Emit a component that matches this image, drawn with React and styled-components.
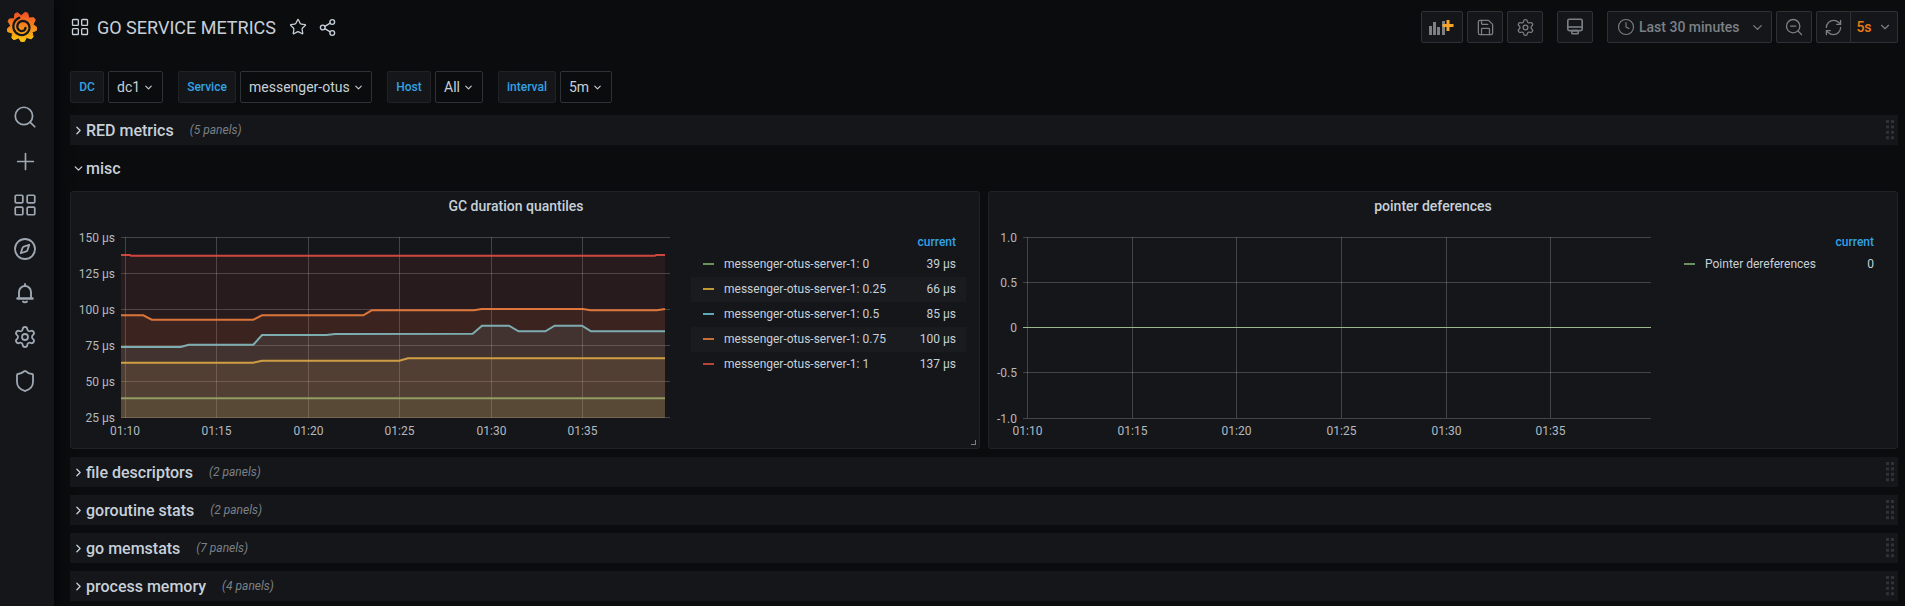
import React from 'react'
import styled, { createGlobalStyle } from 'styled-components'
import {
  ChevronDown, ChevronRight, Clock, Compass, LayoutGrid, Plus, RefreshCw,
  Save, Search, Settings, Share2, Shield, Star, ZoomOut,
} from 'lucide-react'

const GlobalStyle = createGlobalStyle`
  html, body {
    margin: 0;
    height: 100%;
    background: #0b0c0e;
    overflow: hidden;
  }
  body {
    font-family: Roboto, "Liberation Sans", sans-serif;
    color: #c7d0d9;
  }
`

const Page = styled.div`
  display: flex;
  height: 606px;
`

const Sidebar = styled.nav`
  flex: 0 0 54px;
  display: flex;
  flex-direction: column;
  background: #141619;
  box-shadow: 0 0 16px #000;
  color: #9fa7b3;
`

const LogoBox = styled.div`
  height: 95px;
  display: flex;
  justify-content: center;
  padding: 10px 10px 0 0;
  box-sizing: border-box;
`

const NavItem = styled.div`
  height: 44px;
  padding-right: 4px;
  display: flex;
  align-items: center;
  justify-content: center;
`

const Main = styled.main`
  flex: 1;
  min-width: 0;
  padding: 11px 7px 0 16px;
  display: flex;
  flex-direction: column;
`

const Toolbar = styled.header`
  display: flex;
  align-items: center;
  height: 32px;
`

const DashTitle = styled.h1`
  margin: 1px 0 0 7px;
  font-size: 18px;
  font-weight: 400;
  color: #c7d0d9;
`

const TitleIcon = styled.span`
  display: flex;
  color: #c7d0d9;
  margin-left: ${({ $gap }) => $gap}px;
`

const ToolGroup = styled.div`
  display: flex;
  gap: 4px;
  margin-left: ${({ $gap }) => $gap};
`

const ToolButton = styled.button`
  width: ${({ $w }) => $w}px;
  height: 32px;
  padding: 0;
  display: flex;
  align-items: center;
  justify-content: center;
  gap: 6px;
  box-sizing: border-box;
  background: #141619;
  border: 1px solid #2c3235;
  border-radius: 2px;
  color: #7b8087;
  font: 500 14px Roboto, sans-serif;
`

const TimeButton = styled(ToolButton)`
  padding: 0 6px 0 9px;
  gap: 4px;
`

const Joined = styled.div`
  display: flex;
  & > button:first-child { border-radius: 2px 0 0 2px; }
  & > button:last-child { border-radius: 0 2px 2px 0; border-left: 0; }
`

const TimeLabel = styled.span`
  flex: 1;
  text-align: left;
  white-space: nowrap;
`

const OrangeText = styled.span`
  color: #eb7b18;
`

const Variables = styled.section`
  display: flex;
  gap: 15px;
  margin-top: 28px;
  margin-bottom: 12px;
`

const Variable = styled.div`
  display: flex;
  gap: 4px;
`

const VarLabel = styled.label`
  height: 32px;
  width: ${({ $w }) => $w}px;
  box-sizing: border-box;
  display: flex;
  align-items: center;
  justify-content: center;
  background: #141619;
  border: 1px solid #202226;
  border-radius: 2px;
  color: #33a2e5;
  font-size: 12px;
  font-weight: 500;
`

const VarValue = styled.div`
  height: 32px;
  width: ${({ $w }) => $w}px;
  box-sizing: border-box;
  display: flex;
  align-items: center;
  gap: 3px;
  padding-left: 8px;
  background: #0b0c0e;
  border: 1px solid #2c3235;
  border-radius: 2px;
  color: #c7d0d9;
  font-size: 14px;
`

const Rows = styled.div`
  display: flex;
  flex-direction: column;
  gap: 8px;
`

const Row = styled.div`
  position: relative;
  height: 30px;
  display: flex;
  align-items: center;
  padding-left: 2px;
  background: ${({ $open }) => ($open ? 'transparent' : '#141619')};
`

const RowTitle = styled.span`
  margin-left: 1px;
  font-size: 16px;
  font-weight: 500;
  color: #c7d0d9;
`

const RowCount = styled.span`
  margin-left: 16px;
  font-size: 12px;
  font-style: italic;
  color: #7b8087;
`

const DragHandle = styled.svg`
  position: absolute;
  right: 4px;
  top: 5px;
`

const Panels = styled.div`
  display: grid;
  grid-template-columns: 1fr 1fr;
  gap: 8px;
`

const Panel = styled.article`
  position: relative;
  height: 258px;
  box-sizing: border-box;
  background: #141619;
  border: 1px solid #202226;
  border-radius: 3px;
`

const PanelTitle = styled.h2`
  height: 27px;
  margin: 0;
  padding-right: ${({ $shift }) => $shift}px;
  display: flex;
  align-items: center;
  justify-content: center;
  font-size: 14px;
  font-weight: 500;
  color: #c7d0d9;
`

const PanelBody = styled.div`
  display: flex;
  gap: 20px;
  padding-right: 13px;
`

const ChartSvg = styled.svg`
  display: block;
  flex: 1;
  min-width: 0;
  margin-top: 6px;
`

const Legend = styled.div`
  flex: 0 0 ${({ $w }) => $w}px;
  padding-top: 13px;
  font-size: 12px;
`

const LegendHead = styled.div`
  height: 20px;
  box-sizing: border-box;
  padding: 3px 10px 0 0;
  text-align: right;
  font-weight: 500;
  color: #33a2e5;
`

const LegendRow = styled.div`
  height: 25px;
  box-sizing: border-box;
  display: flex;
  align-items: center;
  padding: 0 10px 1px 12px;
  background: ${({ $odd }) => ($odd ? '#191b1f' : 'transparent')};
`

const Swatch = styled.i`
  width: 11px;
  height: 2px;
  margin-right: 10px;
  background: ${({ $color }) => $color};
  opacity: 0.8;
`

const LegendName = styled.span`
  flex: 1;
  white-space: nowrap;
`

const ResizeMark = styled.span`
  position: absolute;
  right: 3px;
  bottom: 3px;
  width: 4px;
  height: 4px;
  border-right: 1px solid #7b8087;
  border-bottom: 1px solid #7b8087;
`

// grafana logo, the gear outline and spiral are computed
const gearPoints = (() => {
  const pts = []
  const teeth = 9
  for (let i = 0; i < teeth; i++) {
    const a = (i / teeth) * Math.PI * 2 - 1.25
    const step = (Math.PI * 2) / teeth
    const rx = [11.6, 15, 15, 11.6]
    const offs = [-0.5, -0.16, 0.1, 0.42]
    offs.forEach((o, j) => {
      const t = a + o * step
      pts.push(`${(15 + rx[j] * Math.cos(t)).toFixed(2)},${(17 + rx[j] * Math.sin(t)).toFixed(2)}`)
    })
  }
  return pts.join(' ')
})()

const spiralPoints = (() => {
  const pts = []
  for (let i = 0; i <= 60; i++) {
    const k = i / 60
    const r = 3.2 + k * 6.6
    const t = 0.3 + k * Math.PI * 2 * 1.65
    pts.push(`${(15.4 + r * Math.cos(t)).toFixed(2)},${(17 + r * Math.sin(t)).toFixed(2)}`)
  }
  return pts.join(' ')
})()

const GrafanaLogo = () => (
  <svg width="30" height="32" viewBox="0 0 30 32">
    <defs>
      <linearGradient id="logoGrad" x1="0" y1="1" x2="0" y2="0">
        <stop offset="0" stopColor="#fcc60e" />
        <stop offset="1" stopColor="#ef4e28" />
      </linearGradient>
    </defs>
    <polygon points={gearPoints} fill="url(#logoGrad)" stroke="url(#logoGrad)" strokeWidth="1" strokeLinejoin="round" />
    <polyline points={spiralPoints} fill="none" stroke="#141619" strokeWidth="2.3" strokeLinecap="round" />
  </svg>
)

const BellIcon = () => (
  <svg width="24" height="24" viewBox="0 0 24 24" fill="none" stroke="currentColor" strokeWidth="1.9" strokeLinecap="round">
    <path d="M6 16.5V11a6 6 0 0 1 12 0v5.5" />
    <path d="M4.5 17.5h15" strokeWidth="2.4" />
    <path d="M12 3v2" />
    <path d="M10 20.5c.6 1 3.4 1 4 0" />
  </svg>
)

const AddPanelIcon = () => (
  <svg width="26" height="16" viewBox="0 0 26 16">
    <g fill="#7b8087">
      <rect x="0" y="7" width="3" height="9" />
      <rect x="4" y="3" width="3" height="13" />
      <rect x="8" y="8" width="3" height="8" />
      <rect x="13" y="2" width="3" height="14" />
    </g>
    <path d="M19 1v11M13.5 6.5h11" stroke="#f5a52c" strokeWidth="3" />
  </svg>
)

const TvIcon = () => (
  <svg width="18" height="18" viewBox="0 0 18 18" fill="none" stroke="currentColor" strokeWidth="1.6">
    <rect x="1.8" y="1.2" width="14.4" height="11.4" rx="1.5" />
    <path d="M1.8 9h14.4" />
    <rect x="5.8" y="12.6" width="6.4" height="3.2" rx="0.8" />
  </svg>
)

const GridLines = ({ xs, ys, x0, x1, y0, y1 }) => (
  <g stroke="rgba(255,255,255,0.2)" strokeWidth="1" shapeRendering="crispEdges">
    {xs.map((x) => <line key={x} x1={x} x2={x} y1={y0} y2={y1} />)}
    {ys.map((y) => <line key={y} x1={x0} x2={x1} y1={y} y2={y} />)}
  </g>
)

const AxisText = styled.text`
  font: 400 12px Roboto, sans-serif;
  fill: #b5b9bf;
`

const times = ['01:10', '01:15', '01:20', '01:25', '01:30', '01:35']

const gcSeries = [
  { name: 'messenger-otus-server-1: 0', value: '39 µs', color: '#7EB26D',
    pts: [[121, 398.3], [665, 398.3]] },
  { name: 'messenger-otus-server-1: 0.25', value: '66 µs', color: '#EAB839',
    pts: [[121, 362.7], [253.3, 362.7], [262, 360.7], [399.3, 360.7], [408, 358.3], [665, 358.3]] },
  { name: 'messenger-otus-server-1: 0.5', value: '85 µs', color: '#6ED0E0',
    pts: [[121, 347], [180.7, 347], [188.7, 344.7], [253.3, 344.7], [262, 335], [326.7, 335], [335, 334], [472.7, 333.7], [482, 325.7], [509, 325.7], [518.6, 331.3], [545.4, 331.3], [554.6, 325.7], [582, 325.7], [591, 331.3], [665, 331.3]] },
  { name: 'messenger-otus-server-1: 0.75', value: '100 µs', color: '#EF843C',
    pts: [[121, 315.3], [143.3, 315.3], [151.7, 319.7], [253.3, 319.7], [262, 315.3], [363.3, 315.3], [371.7, 310.3], [474, 310.3], [481.5, 309], [583, 309], [590.6, 310.3], [657, 310.3], [665, 309]] },
  { name: 'messenger-otus-server-1: 1', value: '137 µs', color: '#E24D42',
    pts: [[121, 255], [130, 255], [131, 255.7], [655, 255.7], [656, 255], [665, 255]] },
]

const GcChart = () => {
  const xs = [125.5, 216.5, 308.5, 399.5, 491.5, 582.5]
  const ys = [237.5, 273.5, 309.5, 345.5, 381.5, 417.5]
  const labels = ['150 µs', '125 µs', '100 µs', '75 µs', '50 µs', '25 µs']
  return (
    <ChartSvg height="215" viewBox="71 225 600 215" preserveAspectRatio="xMinYMin slice">
      <GridLines xs={xs} ys={ys} x0={121} x1={670} y0={237} y1={418} />
      {gcSeries.map((s) => {
        const line = s.pts.map((p) => p.join(',')).join(' ')
        return (
          <g key={s.name}>
            <polygon points={`121,418 ${line} 665,418`} fill={s.color} fillOpacity="0.1" />
            <polyline points={line} fill="none" stroke={s.color} strokeWidth="2" strokeOpacity="0.9" />
          </g>
        )
      })}
      {labels.map((l, i) => (
        <AxisText key={l} x="115" y={ys[i] + 4} textAnchor="end">{l}</AxisText>
      ))}
      {times.map((t, i) => (
        <AxisText key={t} x={i === 0 ? 125 : xs[i]} y="435" textAnchor="middle">{t}</AxisText>
      ))}
    </ChartSvg>
  )
}

const PointerChart = () => {
  const xs = [1027.5, 1132.5, 1236.5, 1341.5, 1446.5, 1550.5]
  const ys = [237.5, 282.5, 327.5, 372.5, 418.5]
  const labels = ['1.0', '0.5', '0', '-0.5', '-1.0']
  return (
    <ChartSvg height="215" viewBox="989 225 663 215" preserveAspectRatio="xMinYMin slice">
      <GridLines xs={xs} ys={ys} x0={1023} x1={1651} y0={237} y1={418} />
      <line x1="1023" x2="1651" y1="327.5" y2="327.5" stroke="#9db78f" strokeWidth="1" shapeRendering="crispEdges" />
      {labels.map((l, i) => (
        <AxisText key={l} x="1017" y={ys[i] + 4} textAnchor="end">{l}</AxisText>
      ))}
      {times.map((t, i) => (
        <AxisText key={t} x={xs[i]} y="435" textAnchor="middle">{t}</AxisText>
      ))}
    </ChartSvg>
  )
}

const LegendTable = ({ width, items }) => (
  <Legend $w={width}>
    <LegendHead>current</LegendHead>
    {items.map((s, i) => (
      <LegendRow key={s.name} $odd={i % 2 === 1}>
        <Swatch $color={s.color} />
        <LegendName>{s.name}</LegendName>
        <span>{s.value}</span>
      </LegendRow>
    ))}
  </Legend>
)

const Handle = () => (
  <DragHandle width="8" height="20" viewBox="0 0 8 20" fill="#2f3236">
    {[0, 1, 2, 3].map((r) => (
      <g key={r}>
        <rect x="0" y={r * 5.4} width="3" height="3" />
        <rect x="5" y={r * 5.4} width="3" height="3" />
      </g>
    ))}
  </DragHandle>
)

const CollapsedRow = ({ title, count }) => (
  <Row>
    <ChevronRight size={13} strokeWidth={2.4} />
    <RowTitle>{title}</RowTitle>
    <RowCount>({count} panels)</RowCount>
    <Handle />
  </Row>
)

const variables = [
  { label: 'DC', labelW: 34, value: 'dc1', valueW: 55 },
  { label: 'Service', labelW: 58, value: 'messenger-otus', valueW: 132 },
  { label: 'Host', labelW: 44, value: 'All', valueW: 48 },
  { label: 'interval', labelW: 58, value: '5m', valueW: 52 },
]

export default function App() {
  return (
    <Page>
      <GlobalStyle />
      <Sidebar>
        <LogoBox><GrafanaLogo /></LogoBox>
        <NavItem><Search size={26} strokeWidth={1.6} /></NavItem>
        <NavItem><Plus size={27} strokeWidth={1.5} /></NavItem>
        <NavItem><LayoutGrid size={26} strokeWidth={1.6} /></NavItem>
        <NavItem><Compass size={24} strokeWidth={1.8} /></NavItem>
        <NavItem><BellIcon /></NavItem>
        <NavItem><Settings size={24} strokeWidth={1.8} /></NavItem>
        <NavItem><Shield size={24} strokeWidth={1.8} /></NavItem>
      </Sidebar>
      <Main>
        <Toolbar>
          <TitleIcon $gap={0}><LayoutGrid size={20} strokeWidth={1.6} /></TitleIcon>
          <DashTitle>GO SERVICE METRICS</DashTitle>
          <TitleIcon $gap={13}><Star size={18} strokeWidth={1.7} /></TitleIcon>
          <TitleIcon $gap={11}><Share2 size={19} strokeWidth={1.7} /></TitleIcon>

          <ToolGroup $gap="auto">
            <ToolButton $w={42}><AddPanelIcon /></ToolButton>
            <ToolButton $w={36}><Save size={19} strokeWidth={1.6} /></ToolButton>
            <ToolButton $w={36}><Settings size={19} strokeWidth={1.6} /></ToolButton>
          </ToolGroup>
          <ToolGroup $gap="14px">
            <ToolButton $w={36}><TvIcon /></ToolButton>
          </ToolGroup>
          <ToolGroup $gap="14px">
            <TimeButton $w={165}>
              <Clock size={18} strokeWidth={1.5} />
              <TimeLabel>Last 30 minutes</TimeLabel>
              <ChevronDown size={15} />
            </TimeButton>
            <ToolButton $w={36}><ZoomOut size={20} strokeWidth={1.6} /></ToolButton>
            <Joined>
              <ToolButton $w={35}><RefreshCw size={19} strokeWidth={1.6} /></ToolButton>
              <ToolButton $w={47}><OrangeText>5s</OrangeText><ChevronDown size={14} /></ToolButton>
            </Joined>
          </ToolGroup>
        </Toolbar>

        <Variables>
          {variables.map((v) => (
            <Variable key={v.label}>
              <VarLabel $w={v.labelW}>{v.label}</VarLabel>
              <VarValue $w={v.valueW}>{v.value}<ChevronDown size={11} strokeWidth={2.4} /></VarValue>
            </Variable>
          ))}
        </Variables>

        <Rows>
          <CollapsedRow title="RED metrics" count={5} />
          <Row $open>
            <ChevronDown size={13} strokeWidth={2.4} />
            <RowTitle>misc</RowTitle>
          </Row>
          <Panels>
            <Panel>
              <PanelTitle $shift={18}>GC duration quantiles</PanelTitle>
              <PanelBody>
                <GcChart />
                <LegendTable width={275} items={gcSeries} />
              </PanelBody>
              <ResizeMark />
            </Panel>
            <Panel>
              <PanelTitle $shift={20}>pointer deferences</PanelTitle>
              <PanelBody>
                <PointerChart />
                <LegendTable width={212} items={[{ name: 'Pointer dereferences', value: '0', color: '#7EB26D' }]} />
              </PanelBody>
            </Panel>
          </Panels>
          <CollapsedRow title="file descriptors" count={2} />
          <CollapsedRow title="goroutine stats" count={2} />
          <CollapsedRow title="go memstats" count={7} />
          <CollapsedRow title="process memory" count={4} />
        </Rows>
      </Main>
    </Page>
  )
}
